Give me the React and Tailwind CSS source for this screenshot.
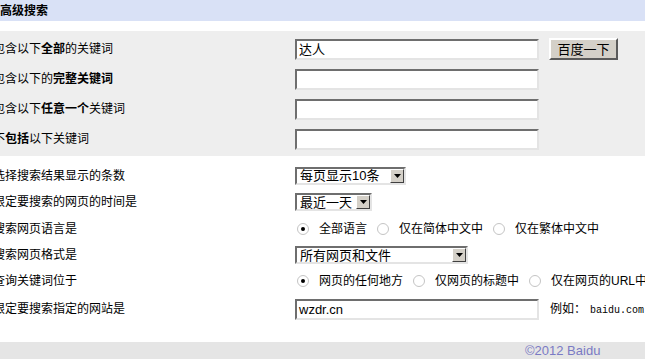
import React from 'react';

const cjk = { fontFamily: '"Liberation Sans", "Noto Sans CJK SC", sans-serif' };

const TextBox = ({ value = '', w = 'w-[244px]' }) => (
  <div
    className={`${w} h-[21px] shrink-0 bg-white border-2 border-t-[#6e6e6e] border-l-[#6e6e6e] border-b-[#e4e4e4] border-r-[#e4e4e4] flex items-center px-[2px] text-[13px] text-black leading-none`}
  >
    {value}
  </div>
);

const SelectBox = ({ text, w }) => (
  <div
    className={`${w} h-[18px] shrink-0 bg-white border-2 border-t-[#6e6e6e] border-l-[#6e6e6e] border-b-[#e4e4e4] border-r-[#e4e4e4] flex items-center justify-between text-[13px] leading-none`}
  >
    <span className="pl-[3px] whitespace-nowrap">{text}</span>
    <span className="w-[14px] h-[14px] bg-[#d4d0c8] border border-t-white border-l-white border-b-[#404040] border-r-[#404040] flex items-center justify-center">
      <svg width="7" height="4" viewBox="0 0 7 4">
        <polygon points="0,0 7,0 3.5,4" fill="#000" />
      </svg>
    </span>
  </div>
);

const Radio = ({ checked }) => (
  <span className="w-[12px] h-[12px] rounded-full bg-white border border-[#c4c4c4] flex items-center justify-center shrink-0">
    {checked && <span className="w-[4px] h-[4px] rounded-full bg-black" />}
  </span>
);

const RadioGroup = ({ options }) => (
  <div className="flex items-center text-[12px] pl-[2px] whitespace-nowrap shrink-0">
    {options.map((o, i) => (
      <div key={o} className="flex items-center mr-[10px] shrink-0">
        <Radio checked={i === 0} />
        <span className="ml-[10px]">{o}</span>
      </div>
    ))}
  </div>
);

const Row = ({ h, label, children }) => (
  <div className={`${h} flex items-center`}>
    <div className="w-[302px] ml-[-7px] text-[12px] text-black shrink-0 whitespace-nowrap">{label}</div>
    {children}
  </div>
);

export default function App() {
  return (
    <div className="w-[645px] h-[359px] overflow-hidden bg-white text-black" style={cjk}>
      <div className="h-[21px] bg-[#d9e1f6] flex items-center text-[12px] font-bold">高级搜索</div>
      <div className="h-[10px]" />

      <div className="bg-[#eeeeee] pt-[3px] pb-[2px]">
        <Row h="h-[30px]" label={<>包含以下<b>全部</b>的关键词</>}>
          <TextBox value="达人" />
          <button className="ml-[10px] w-[69px] h-[22px] shrink-0 bg-[#d4d0c8] border-2 border-t-white border-l-white border-b-[#5a5a5a] border-r-[#5a5a5a] text-[13px] leading-none">
            百度一下
          </button>
        </Row>
        <Row h="h-[30px]" label={<>包含以下的<b>完整关键词</b></>}>
          <TextBox />
        </Row>
        <Row h="h-[30px]" label={<>包含以下<b>任意一个</b>关键词</>}>
          <TextBox />
        </Row>
        <Row h="h-[30px]" label={<>不<b>包括</b>以下关键词</>}>
          <TextBox />
        </Row>
      </div>

      <div className="pt-[7px]">
        <Row h="h-[25px]" label="选择搜索结果显示的条数">
          <SelectBox text="每页显示10条" w="w-[111px]" />
        </Row>
        <Row h="h-[28px]" label="限定要搜索的网页的时间是">
          <SelectBox text="最近一天" w="w-[77px]" />
        </Row>
        <Row h="h-[26px]" label="搜索网页语言是">
          <RadioGroup options={['全部语言', '仅在简体中文中', '仅在繁体中文中']} />
        </Row>
        <Row h="h-[26px]" label="搜索网页格式是">
          <SelectBox text="所有网页和文件" w="w-[173px]" />
        </Row>
        <Row h="h-[26px]" label="查询关键词位于">
          <RadioGroup options={['网页的任何地方', '仅网页的标题中', '仅在网页的URL中']} />
        </Row>
        <Row h="h-[30px]" label="限定要搜索指定的网站是">
          <TextBox value="wzdr.cn" />
          <span className="ml-[11px] text-[12px] whitespace-nowrap shrink-0">
            例如：
            <span className="text-[10px] ml-[4px]" style={{ fontFamily: '"Liberation Mono", monospace' }}>
              baidu.com
            </span>
          </span>
        </Row>
      </div>

      <div className="h-[18px]" />
      <div className="h-[17px] bg-[#e5e5e5] flex items-center pl-[525px] text-[13px] text-[#7a7ac4] leading-none">
        ©2012 Baidu
      </div>
    </div>
  );
}
